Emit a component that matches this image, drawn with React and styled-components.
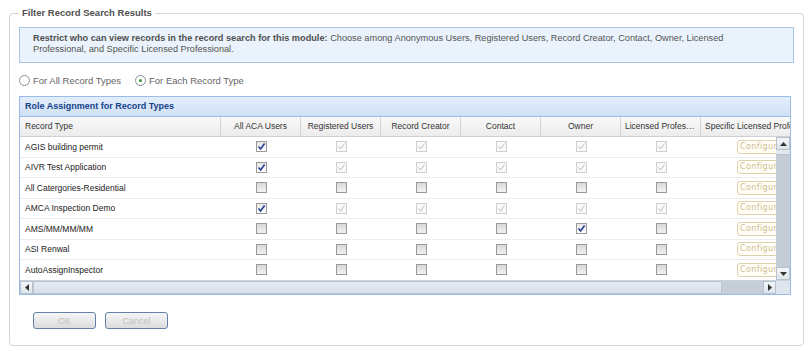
import React from 'react'
import styled, { createGlobalStyle } from 'styled-components'

const GlobalStyle = createGlobalStyle`
  html, body {
    margin: 0;
    padding: 0;
    background: #fff;
    font-family: "Liberation Sans", Arial, sans-serif;
  }
`

const columns = [
  { key: 'aca', label: 'All ACA Users' },
  { key: 'reg', label: 'Registered Users' },
  { key: 'creator', label: 'Record Creator' },
  { key: 'contact', label: 'Contact' },
  { key: 'owner', label: 'Owner' },
  { key: 'lp', label: 'Licensed Professional' },
]

const allOn = ['on', 'dis', 'dis', 'dis', 'dis', 'dis']
const allOff = ['off', 'off', 'off', 'off', 'off', 'off']

const rows = [
  { name: 'AGIS building permit', boxes: allOn },
  { name: 'AIVR Test Application', boxes: allOn },
  { name: 'All Catergories-Residential', boxes: allOff },
  { name: 'AMCA Inspection Demo', boxes: allOn },
  { name: 'AMS/MM/MM/MM', boxes: ['off', 'off', 'off', 'off', 'on', 'off'] },
  { name: 'ASI Renwal', boxes: allOff },
  { name: 'AutoAssignInspector', boxes: allOff },
]

export default function App() {
  return (
    <>
      <GlobalStyle />
      <Fieldset>
        <Legend>Filter Record Search Results</Legend>
        <Info>
          <b>Restrict who can view records in the record search for this module:</b> Choose among Anonymous Users,
          Registered Users, Record Creator, Contact, Owner, Licensed Professional, and Specific Licensed Professional.
        </Info>
        <RadioRow>
          <RadioLabel>
            <Radio />
            For All Record Types
          </RadioLabel>
          <RadioLabel>
            <Radio selected />
            For Each Record Type
          </RadioLabel>
        </RadioRow>

        <Grid>
          <GridTitle>Role Assignment for Record Types</GridTitle>
          <HeaderRow>
            <HeadCell first>Record Type</HeadCell>
            {columns.map(c => (
              <HeadCell key={c.key} center>{c.label}</HeadCell>
            ))}
            <HeadCell wide>Specific Licensed Professional</HeadCell>
          </HeaderRow>
          <Body>
            <Viewport>
              {rows.map(r => (
                <Row key={r.name}>
                  <Cell first>{r.name}</Cell>
                  {r.boxes.map((b, i) => (
                    <Cell key={i} center>
                      <Check state={b}>
                        {b !== 'off' && (
                          <svg width="9" height="9" viewBox="0 0 9 9">
                            <path d="M1.5 4.5 L3.6 7 L7.6 1.5" fill="none" strokeWidth={b === 'on' ? 1.6 : 1} />
                          </svg>
                        )}
                      </Check>
                    </Cell>
                  ))}
                  <Cell wide center>
                    <Configure>Configure</Configure>
                  </Cell>
                </Row>
              ))}
            </Viewport>
            <VScroll>
              <ArrowBtn>
                <svg width="7" height="4" viewBox="0 0 7 4"><path d="M0 4 L3.5 0 L7 4Z" fill="#333" /></svg>
              </ArrowBtn>
              <VThumbGap />
              <VTrack />
              <ArrowBtn>
                <svg width="7" height="4" viewBox="0 0 7 4"><path d="M0 0 L3.5 4 L7 0Z" fill="#333" /></svg>
              </ArrowBtn>
            </VScroll>
          </Body>
          <HScroll>
            <ArrowBtn>
              <svg width="4" height="7" viewBox="0 0 4 7"><path d="M4 0 L0 3.5 L4 7Z" fill="#333" /></svg>
            </ArrowBtn>
            <HThumb />
            <HTrack />
            <ArrowBtn>
              <svg width="4" height="7" viewBox="0 0 4 7"><path d="M0 0 L4 3.5 L0 7Z" fill="#333" /></svg>
            </ArrowBtn>
            <Corner />
          </HScroll>
        </Grid>

        <Buttons>
          <Button disabled>OK</Button>
          <Button disabled>Cancel</Button>
        </Buttons>
      </Fieldset>
    </>
  )
}

const Fieldset = styled.fieldset`
  margin: 7px 5px 0 9px;
  padding: 8px 9px 16px 9px;
  border: 1px solid #d8d5ca;
  border-radius: 4px;
  min-width: 0;
`

const Legend = styled.legend`
  padding: 0 3px;
  font-size: 9.5px;
  line-height: 12px;
  font-weight: bold;
  color: #505050;
`

const Info = styled.div`
  border: 1px solid #a9c7e4;
  background: #eaf2fb;
  padding: 5px 60px 6px 13px;
  font-size: 9.2px;
  line-height: 11px;
  color: #555;
  height: 23px;
  b {
    color: #505050;
  }
`

const RadioRow = styled.div`
  display: flex;
  gap: 14px;
  margin-top: 11px;
  height: 12px;
  align-items: center;
`

const RadioLabel = styled.label`
  display: flex;
  align-items: center;
  gap: 3px;
  font-size: 9.5px;
  color: #666;
`

const Radio = styled.span`
  width: 9px;
  height: 9px;
  border: 1px solid #8a8f96;
  border-radius: 50%;
  background: #fff;
  display: flex;
  align-items: center;
  justify-content: center;
  &::after {
    content: '';
    width: 3px;
    height: 3px;
    border-radius: 50%;
    background: ${p => (p.selected ? '#3a9a2e' : 'transparent')};
  }
`

const Grid = styled.div`
  margin-top: 10px;
  width: 772px;
  border: 1px solid #99bbe8;
  box-sizing: border-box;
  overflow: hidden;
`

const GridTitle = styled.div`
  height: 19px;
  line-height: 19px;
  padding-left: 5px;
  font-size: 9px;
  font-weight: bold;
  color: #15428b;
  background: linear-gradient(#e4eefa, #cfe0f5);
  border-bottom: 1px solid #99bbe8;
`

const HeaderRow = styled.div`
  display: flex;
  height: 19px;
  background: linear-gradient(#f8f8f8, #ececec);
  border-bottom: 1px solid #d0d0d0;
  overflow: hidden;
`

const HeadCell = styled.div`
  flex: 0 0 ${p => (p.first ? 201 : p.wide ? 120 : 80)}px;
  box-sizing: border-box;
  border-right: 1px solid #d4d4d4;
  padding: 0 ${p => (p.first ? 5 : 4)}px;
  line-height: 19px;
  font-size: 8.5px;
  color: #333;
  white-space: nowrap;
  overflow: hidden;
  text-overflow: ellipsis;
  text-align: ${p => (p.center ? 'center' : 'left')};
`

const Body = styled.div`
  display: flex;
  height: 143px;
`

const Viewport = styled.div`
  flex: 0 0 756px;
  overflow: hidden;
`

const Row = styled.div`
  display: flex;
  height: 19.5px;
  border-bottom: 1px solid #ededed;
  align-items: center;
`

const Cell = styled.div`
  flex: 0 0 ${p => (p.first ? 201 : p.wide ? 120 : 80)}px;
  box-sizing: border-box;
  padding-left: ${p => (p.first ? 5 : 0)}px;
  font-size: 8.5px;
  color: #222;
  white-space: nowrap;
  display: flex;
  align-items: center;
  justify-content: ${p => (p.center ? 'center' : 'flex-start')};
`

const Check = styled.span`
  width: 11px;
  height: 11px;
  box-sizing: border-box;
  display: flex;
  align-items: center;
  justify-content: center;
  border: 1px solid ${p => (p.state === 'dis' ? '#cfcfcf' : '#9a9a9a')};
  background: ${p =>
    p.state === 'off' ? 'linear-gradient(#d8d8d8, #f2f2f2)' : p.state === 'dis' ? '#fafafa' : 'linear-gradient(#e6e6e6, #ffffff)'};
  path {
    stroke: ${p => (p.state === 'on' ? '#283f93' : '#bdbdbd')};
  }
`

const Configure = styled.span`
  width: 48px;
  height: 14px;
  box-sizing: border-box;
  border: 1px solid #dcd2ad;
  border-radius: 3px;
  font-family: "DejaVu Sans", Verdana, sans-serif;
  font-size: 8px;
  line-height: 12px;
  letter-spacing: 0.4px;
  color: #cdbf92;
  padding-left: 2px;
  background: #fffdf6;
`

const VScroll = styled.div`
  flex: 0 0 14px;
  display: flex;
  flex-direction: column;
  background: #c6ced8;
`

const ArrowBtn = styled.div`
  flex: 0 0 13px;
  height: 13px;
  display: flex;
  align-items: center;
  justify-content: center;
  background: linear-gradient(#f3f6f9, #dfe5ec);
  border: 1px solid #b7c2ce;
  box-sizing: border-box;
`

const VThumbGap = styled.div`
  height: 4px;
  background: #e4e9ef;
  border-bottom: 1px solid #b7c2ce;
`

const VTrack = styled.div`
  flex: 1;
  background: #c4ccd6;
`

const HScroll = styled.div`
  display: flex;
  height: 14px;
  border-top: 1px solid #c9d3de;
  box-sizing: border-box;
`

const HThumb = styled.div`
  flex: 0 0 689px;
  background: linear-gradient(#e6ecf2, #d7dfe8);
  border: 1px solid #b9c5d2;
  box-sizing: border-box;
`

const HTrack = styled.div`
  flex: 1;
  background: #c6ced8;
`

const Corner = styled.div`
  flex: 0 0 14px;
  background: #dfe5ec;
`

const Buttons = styled.div`
  display: flex;
  gap: 9px;
  margin: 17px 0 0 14px;
`

const Button = styled.button`
  width: 63px;
  height: 17px;
  padding: 0;
  border: 1px solid #6481a8;
  border-radius: 3px;
  background: linear-gradient(#f5f5f5, #dcdcdc);
  font-family: "Liberation Sans", Arial, sans-serif;
  font-size: 9px;
  color: #c2c2c2;
`
